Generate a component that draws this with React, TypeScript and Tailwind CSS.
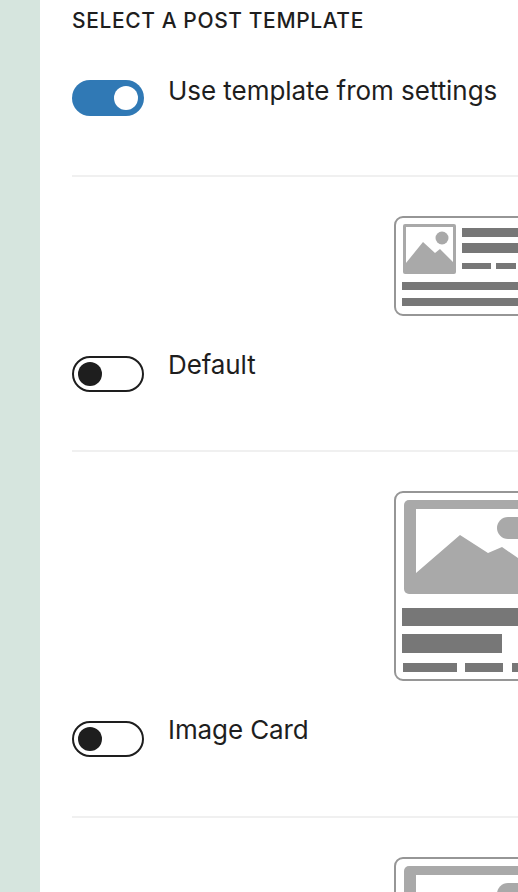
function Toggle({ on = false }: { on?: boolean }) {
  if (on) {
    return (
      <span className="flex h-9 w-[72px] shrink-0 items-center justify-end rounded-full bg-[#3079b5] pr-[6px]">
        <span className="h-6 w-6 rounded-full bg-white" />
      </span>
    );
  }
  return (
    <span className="flex h-9 w-[72px] shrink-0 items-center rounded-full border-2 border-[#1e1e1e] bg-white pl-[4px]">
      <span className="h-6 w-6 rounded-full bg-[#1e1e1e]" />
    </span>
  );
}

// small layout: picture on the left, text bars on the right
function DefaultThumb() {
  return (
    <svg width="124" height="100" viewBox="0 0 124 100" className="block blur-[0.5px]">
      <rect x="1" y="1" width="160" height="98" rx="8" fill="#fff" stroke="#969696" strokeWidth="2" />
      <rect x="9" y="8" width="53" height="50" rx="2" fill="#a9a9a9" />
      <rect x="12" y="11" width="47" height="36" fill="#fff" />
      <path d="M12 47 L29 26 L41 37 L46 33 L60 47 L60 55 L12 55 Z" fill="#a9a9a9" />
      <circle cx="48" cy="22" r="6.5" fill="#a9a9a9" />
      <rect x="68" y="12" width="70" height="9" fill="#777" />
      <rect x="68" y="27" width="70" height="10" fill="#777" />
      <rect x="68" y="47" width="29" height="6" fill="#777" />
      <rect x="102" y="47" width="20" height="6" fill="#777" />
      <rect x="8" y="66" width="130" height="8" fill="#777" />
      <rect x="8" y="82" width="130" height="8" fill="#777" />
    </svg>
  );
}

// large layout: picture on top, text bars under it
function ImageThumb() {
  return (
    <svg width="124" height="190" viewBox="0 0 124 190" className="block blur-[0.5px]">
      <rect x="1" y="1" width="160" height="188" rx="8" fill="#fff" stroke="#969696" strokeWidth="2" />
      <rect x="10" y="9" width="140" height="94" rx="5" fill="#a9a9a9" />
      <rect x="22" y="18" width="120" height="70" fill="#fff" />
      <path d="M22 82 L66 44 L94 62 L108 56 L124 67 L124 95 L22 95 Z" fill="#a9a9a9" />
      <rect x="103" y="26" width="40" height="22" rx="11" fill="#a9a9a9" />
      <rect x="8" y="117" width="130" height="18" fill="#777" />
      <rect x="8" y="143" width="100" height="19" fill="#777" />
      <rect x="9" y="172" width="54" height="9" fill="#777" />
      <rect x="71" y="172" width="38" height="9" fill="#777" />
      <rect x="118" y="172" width="30" height="9" fill="#777" />
    </svg>
  );
}

function TemplateRow({ label, className, children }: { label?: string; className: string; children: React.ReactNode }) {
  return (
    <div className={`border-t-2 border-[#f0f0f0] pt-[39px] ${className}`}>
      <div className="ml-[322px]">{children}</div>
      {label && (
        <div className="mt-10 flex gap-6">
          <Toggle />
          <span className="-mt-[6px] text-[26px] leading-[30px] tracking-[-0.1px] text-[#1e1e1e]">{label}</span>
        </div>
      )}
    </div>
  );
}

export default function App() {
  return (
    <div className="flex h-[892px] w-[518px] overflow-hidden bg-white font-['Inter',sans-serif]">
      <div className="w-10 shrink-0 bg-[#d6e5de]" />
      <div className="min-w-0 flex-1 pl-8">
        <h2 className="mt-[9px] text-[21px] leading-[24px] font-medium tracking-[0.6px] text-[#1e1e1e]">
          SELECT A POST TEMPLATE
        </h2>
        <div className="mt-[47px] flex gap-6 pb-[59px]">
          <Toggle on />
          <span className="-mt-[4px] text-[26px] leading-[30px] tracking-[-0.05px] text-[#1e1e1e]">Use template from settings</span>
        </div>
        <TemplateRow label="Default" className="pb-[58px]">
          <DefaultThumb />
        </TemplateRow>
        <TemplateRow label="Image Card" className="pb-[59px]">
          <ImageThumb />
        </TemplateRow>
        <TemplateRow className="pb-0">
          <ImageThumb />
        </TemplateRow>
      </div>
    </div>
  );
}
